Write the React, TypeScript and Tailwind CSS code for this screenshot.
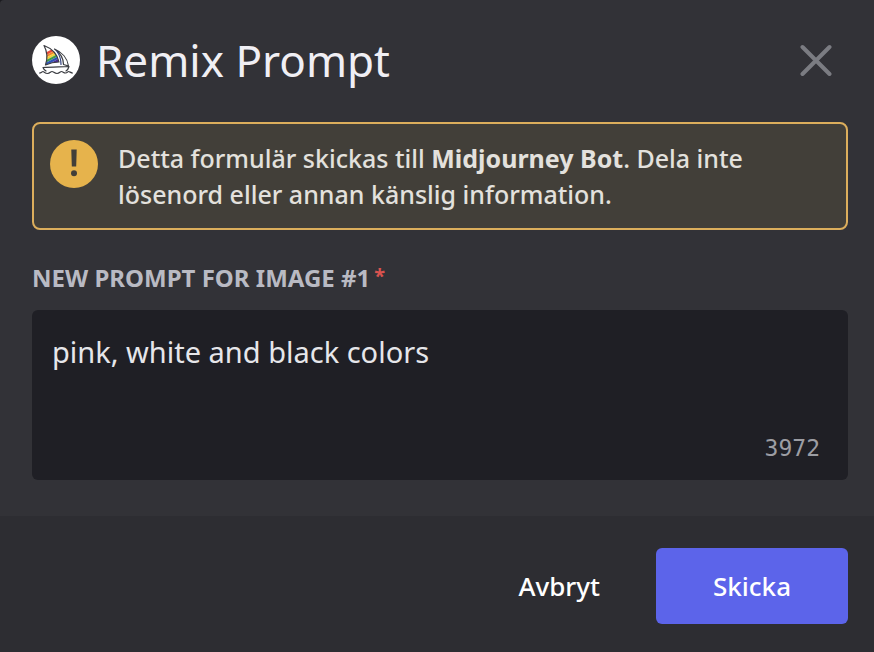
import { useState } from "react";

const MAX_LENGTH = 4000;

function BotAvatar() {
  return (
    <svg viewBox="0 0 48 48" className="size-12 shrink-0" role="img" aria-label="Midjourney Bot">
      <defs>
        <clipPath id="main-sail">
          <path d="M12 9.500C20 12.500 25.500 18.500 27 26c-4 0-9.500 1.200-13.500 3 2.200-6.500 2-13-1.500-19.500z" />
        </clipPath>
      </defs>
      <circle cx="24" cy="24" r="24" fill="#fff" />
      <g clipPath="url(#main-sail)">
        <g transform="rotate(-28 20 20)">
          <rect x="6" y="14" width="28" height="2.500" fill="#e5483a" />
          <rect x="6" y="16.500" width="28" height="2.200" fill="#f08a2c" />
          <rect x="6" y="18.700" width="28" height="2.200" fill="#f3d13a" />
          <rect x="6" y="20.900" width="28" height="2.200" fill="#3f9c4a" />
          <rect x="6" y="23.100" width="28" height="2.400" fill="#2f55b8" />
          <rect x="6" y="25.500" width="28" height="8" fill="#4a2c91" />
        </g>
      </g>
      <g fill="none" stroke="#3b3d42" strokeWidth="1.200" strokeLinecap="round" strokeLinejoin="round">
        <path d="M12 9.500C20 12.500 25.500 18.500 27 26c-4 0-9.500 1.200-13.500 3 2.200-6.500 2-13-1.500-19.500z" />
        <path d="M22.500 13c7.500 3 13 9.500 14 17l-5-1.500c0-6-2.500-11-9-15.500z" />
        <path d="M25 15.500c2.800 3.800 4 8 4 13" stroke="#2f3f7d" />
        <path d="M11 31.500c8-.200 17.500-.700 26-1-.500 2-1.500 3.500-3 4.500M11 31.500c.500 1.500 1.500 2.500 3 3.500" />
        <path d="M7.500 37c1.500 0 2.500-1.500 3.500-1.500s2 2 4.500 2 3-2 4.500-2 2.500 2 5 2 3-2 4.500-2 2 1.500 4 1.500 2-1.500 3-1.500 2.500 1.500 4 1.500" />
      </g>
    </svg>
  );
}

function WarningIcon() {
  return (
    <svg viewBox="0 0 48 48" className="size-12 shrink-0" aria-hidden="true">
      <circle cx="24" cy="24" r="24" fill="#e6b34c" />
      <path d="M21.300 9.500h5.400l-.500 17h-4.400z" fill="#423f39" />
      <circle cx="24" cy="33.300" r="3" fill="#423f39" />
    </svg>
  );
}

function CloseIcon() {
  return (
    <svg viewBox="0 0 32 32" className="size-8" aria-hidden="true">
      <path d="M2.500 3l27 27M29.500 3l-27 27" fill="none" stroke="#7b7c82" strokeWidth="4" strokeLinecap="round" />
    </svg>
  );
}

export default function App() {
  const [prompt, setPrompt] = useState("pink, white and black colors");

  return (
    <div className="min-h-screen bg-[#1b1b1f] font-['Noto_Sans',sans-serif]">
      <form
        role="dialog"
        aria-labelledby="dialog-title"
        onSubmit={(e) => e.preventDefault()}
        className="flex min-h-screen flex-col rounded-tl bg-[#323237]"
      >
        <header className="flex items-center gap-4 pt-8 pr-[26px] pl-8">
          <BotAvatar />
          <h1 id="dialog-title" className="flex-1 text-[44px] leading-[56px] text-[#f0eff4]">
            Remix Prompt
          </h1>
          <button type="button" aria-label="Stäng" className="mr-4">
            <CloseIcon />
          </button>
        </header>

        <div className="flex flex-col pt-[34px] pr-[26px] pb-9 pl-8">
          <div className="flex gap-5 rounded-lg border-2 border-[#dcae5c] bg-[#423f39] p-4">
            <WarningIcon />
            <p className="text-[25px] leading-9 font-medium text-[#e3e1dd]">
              Detta formulär skickas till <strong className="font-bold">Midjourney Bot</strong>. Dela inte
              <br />
              lösenord eller annan känslig information.
            </p>
          </div>

          <label htmlFor="prompt" className="mt-8 mb-4 flex gap-1 text-2xl font-bold text-[#b9bac3] uppercase">
            New prompt for image #1
            <span className="text-xl text-[#d9534f]">*</span>
          </label>
          <div className="flex flex-col rounded-md bg-[#1f1f25] px-5 pt-6 pb-4">
            <textarea
              id="prompt"
              rows={2}
              value={prompt}
              maxLength={MAX_LENGTH}
              onChange={(e) => setPrompt(e.target.value)}
              className="w-full resize-none bg-transparent text-[29px] leading-9 text-[#e6e6ea] outline-none"
            />
            <output
              htmlFor="prompt"
              className="mt-[26px] mr-2 self-end font-['DejaVu_Sans_Mono',monospace] text-[23px] leading-8 text-[#9c9da3]"
            >
              {MAX_LENGTH - prompt.length}
            </output>
          </div>
        </div>

        <footer className="flex flex-1 items-start justify-end gap-2 bg-[#2d2d32] pt-8 pr-[26px] pb-7 pl-8 font-medium text-white">
          <button type="button" className="h-[76px] px-12 text-[26px]">
            Avbryt
          </button>
          <button type="submit" className="h-[76px] w-48 rounded-md bg-[#5c64ea] text-[26px]">
            Skicka
          </button>
        </footer>
      </form>
    </div>
  );
}
